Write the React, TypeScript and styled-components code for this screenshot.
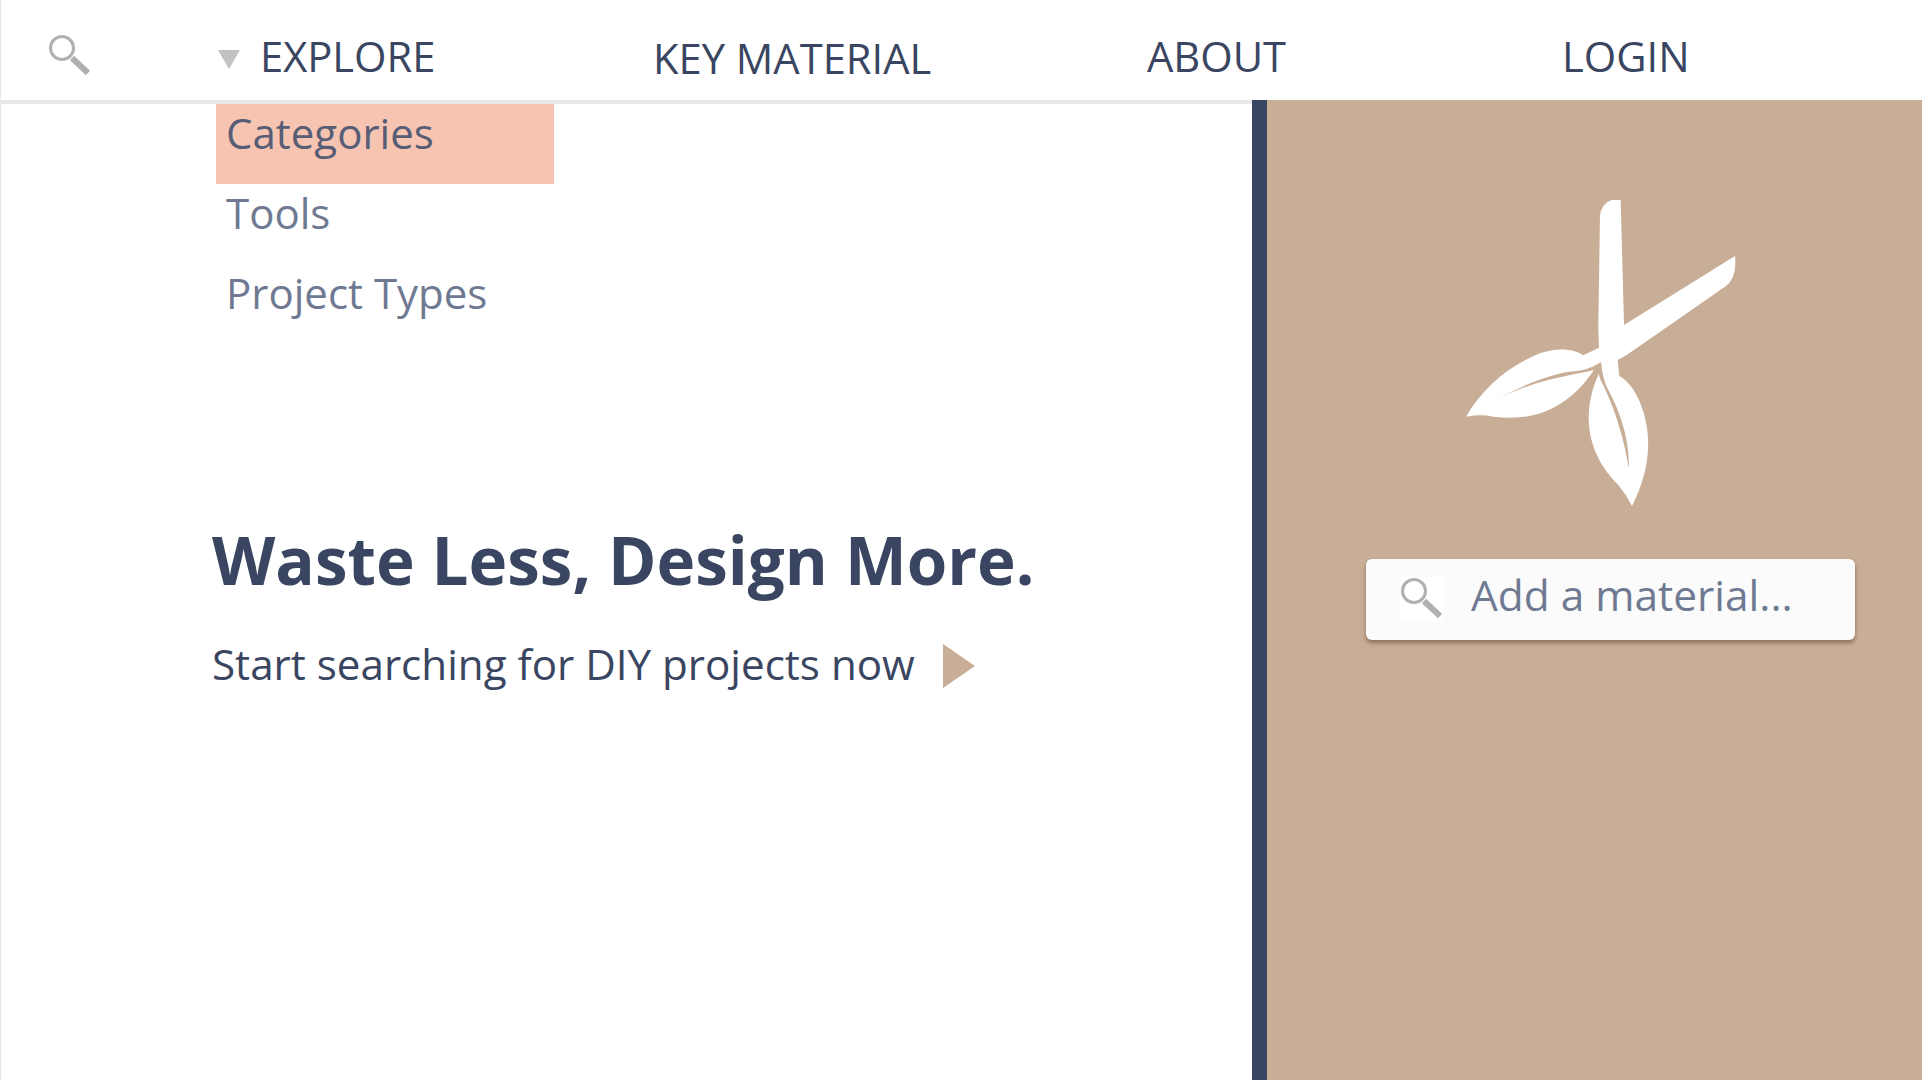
import React from "react";
import styled, { createGlobalStyle } from "styled-components";

const Global = createGlobalStyle`
  html, body { margin: 0; padding: 0; background: #fff; overflow: hidden; }
  body { font-family: "Open Sans", "Liberation Sans", sans-serif; }
`;

const Page = styled.div`
  width: 1922px;
  height: 1080px;
  display: flex;
  flex-direction: column;
  overflow: hidden;
`;

const Nav = styled.nav`
  height: 100px;
  flex: none;
  box-sizing: border-box;
  padding-top: 12px;
  display: grid;
  grid-template-columns: 216px 436px 494px 415px 1fr;
  align-items: center;
  border-left: 1px solid #e8e8e8;
`;

const NavIconCell = styled.div`
  padding-left: 46px;
  display: flex;
  align-items: center;
  height: 100%;
`;

const NavItem = styled.a<{ $drop?: number }>`
  font-size: 41.7px;
  line-height: 56px;
  color: #3a4661;
  display: flex;
  align-items: center;
  gap: 20px;
  position: relative;
  top: ${(p) => p.$drop ?? 0}px;
`;

const DownTriangle = styled.span`
  width: 0;
  height: 0;
  border-left: 11px solid transparent;
  border-right: 11px solid transparent;
  border-top: 19px solid #c2c2c2;
  margin: 6px 0 0 1px;
`;

const NavRule = styled.div`
  height: 4px;
  flex: none;
  background: #e8e8e8;
  width: 1252px;
`;

const Body = styled.div`
  flex: 1;
  display: flex;
  margin-top: -4px;
  min-height: 0;
`;

const LeftPane = styled.main`
  width: 1252px;
  flex: none;
  box-sizing: border-box;
  border-left: 1px solid #e8e8e8;
  position: relative;
  display: flex;
  flex-direction: column;
  padding: 416px 0 0 211px;
`;

const Menu = styled.ul`
  position: absolute;
  top: 4px;
  left: 215px;
  width: 338px;
  margin: 0;
  padding: 0;
  list-style: none;
`;

const MenuItem = styled.li<{ $active?: boolean }>`
  height: 80px;
  box-sizing: border-box;
  padding-left: 10px;
  font-size: 42px;
  line-height: 58px;
  color: ${(p) => (p.$active ? "#565d75" : "#6f7a92")};
  background: ${(p) => (p.$active ? "#f7c4b2" : "transparent")};
`;

const Headline = styled.h1`
  margin: 0;
  font-size: 65.5px;
  line-height: 88px;
  font-weight: 700;
  color: #3a4661;
  white-space: nowrap;
`;

const SubRow = styled.div`
  margin-top: 30px;
  display: flex;
  align-items: center;
  gap: 28px;
`;

const SubText = styled.p`
  margin: 0;
  font-size: 42.15px;
  line-height: 60px;
  color: #3a4661;
  white-space: nowrap;
`;

const RightTriangle = styled.span`
  width: 0;
  height: 0;
  border-top: 22px solid transparent;
  border-bottom: 22px solid transparent;
  border-left: 32px solid #c8ae97;
  margin-top: 3px;
`;

const Divider = styled.div`
  width: 15px;
  flex: none;
  background: #3a4661;
`;

const RightPane = styled.aside`
  flex: 1;
  background: #c9ae97;
  display: flex;
  flex-direction: column;
  align-items: flex-start;
`;

const Logo = styled.svg`
  display: block;
  width: 380px;
  height: 360px;
  margin: 70px 0 0 133px;
  flex: none;
`;

const SearchBox = styled.div`
  margin: 29px 0 0 99px;
  width: 489px;
  height: 81px;
  box-sizing: border-box;
  background: #fbfbfb;
  border-radius: 6px;
  box-shadow: 0 3px 4px rgba(60, 40, 20, 0.45);
  display: flex;
  align-items: center;
  padding-left: 33px;
  gap: 28px;
`;

const IconTile = styled.span`
  width: 44px;
  height: 44px;
  background: #fff;
  display: flex;
  margin-top: -2px;
`;

const Placeholder = styled.span`
  font-size: 42.4px;
  line-height: 56px;
  color: #6f7a92;
  white-space: nowrap;
  margin-top: -9px;
`;

const SearchGlyph = () => (
  <svg width="44" height="44" viewBox="0 0 44 44" fill="none">
    <circle cx="15" cy="14" r="11.5" stroke="#b0b0b0" strokeWidth="3" />
    <path d="M25 24 L41 39" stroke="#b0b0b0" strokeWidth="6" />
  </svg>
);

export default function App() {
  return (
    <Page>
      <Global />
      <Nav>
        <NavIconCell>
          <SearchGlyph />
        </NavIconCell>
        <NavItem>
          <DownTriangle />
          EXPLORE
        </NavItem>
        <NavItem $drop={2}>KEY MATERIAL</NavItem>
        <NavItem>ABOUT</NavItem>
        <NavItem>LOGIN</NavItem>
      </Nav>
      <NavRule />
      <Body>
        <LeftPane>
          <Menu>
            <MenuItem $active>Categories</MenuItem>
            <MenuItem>Tools</MenuItem>
            <MenuItem>Project Types</MenuItem>
          </Menu>
          <Headline>Waste Less, Design More.</Headline>
          <SubRow>
            <SubText>Start searching for DIY projects now</SubText>
            <RightTriangle />
          </SubRow>
        </LeftPane>
        <Divider />
        <RightPane>
          <Logo viewBox="0 0 1140 1080">
            <path
              fill="#fff"
              d="M662 90 L635 90 Q605 100 600 135 L595 470 L597 533 L550 556 C520 535 470 532 420 550 C330 585 250 650 198 740 Q245 732 280 740 C400 755 500 720 582 600 C520 615 400 630 290 688 C380 640 470 605 530 603 C560 600 580 590 603 576 Q608 630 625 660 C664 730 690 820 686 895 C674 810 645 720 612 650 Q600 630 596 612 C570 670 560 730 570 790 C585 870 630 920 655 945 Q680 975 696 1008 C730 940 750 870 743 790 C735 710 700 640 658 618 L653 570 L680 555 L975 350 Q1012 325 1005 258 L672 465 Z"
            />
          </Logo>
          <SearchBox>
            <IconTile>
              <SearchGlyph />
            </IconTile>
            <Placeholder>Add a material...</Placeholder>
          </SearchBox>
        </RightPane>
      </Body>
    </Page>
  );
}
